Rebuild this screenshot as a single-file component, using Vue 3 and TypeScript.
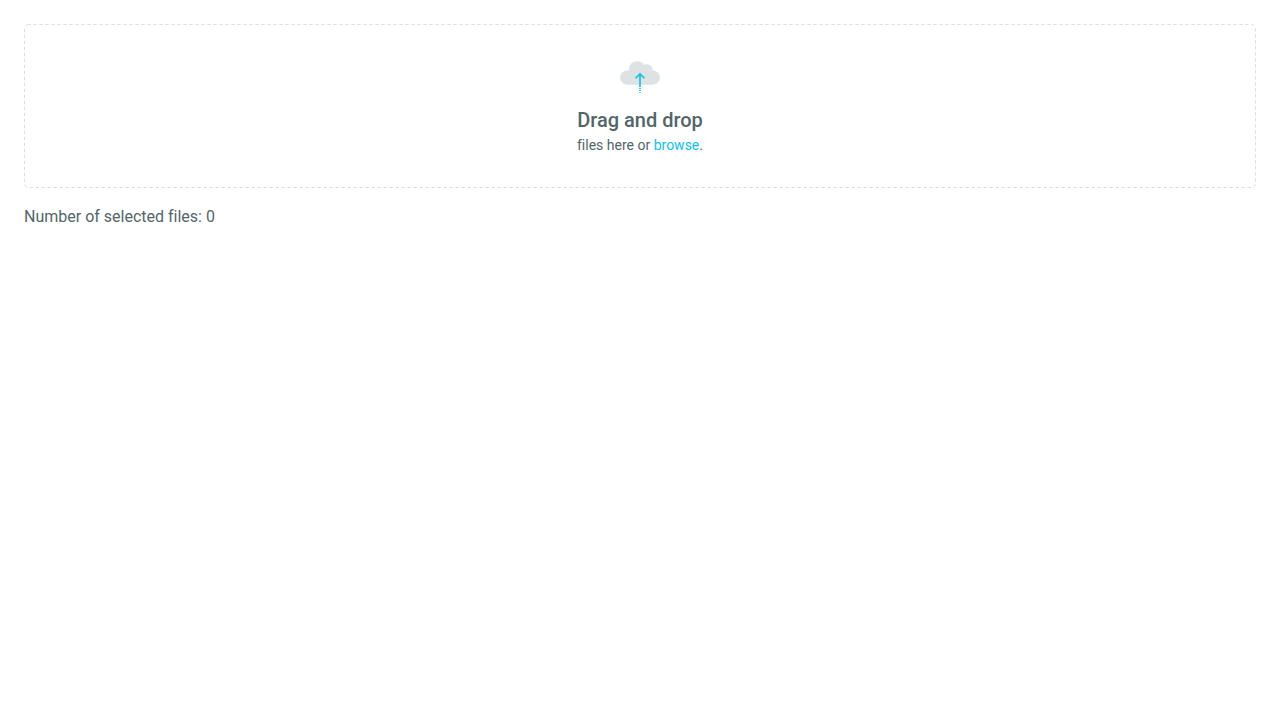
<script setup lang="ts">
import { ref } from 'vue'

const files = ref<File[]>([])
const picker = ref<HTMLInputElement | null>(null)

function onDrop(event: DragEvent) {
  files.value = Array.from(event.dataTransfer?.files ?? [])
}

function onPick(event: Event) {
  files.value = Array.from((event.target as HTMLInputElement).files ?? [])
}
</script>

<template>
  <main class="page">
    <section class="dropzone" @dragover.prevent @drop.prevent="onDrop">
      <svg class="outline" aria-hidden="true">
        <rect class="outline-rect" x="0.5" y="0.5" rx="4" />
      </svg>
      <svg class="cloud" width="40" height="40" viewBox="0 0 40 40" aria-hidden="true">
        <path
          fill="#dde2e2"
          d="M7.2 27.7A7.15 7.15 0 0 1 7.2 13.4H9A8.3 8.3 0 0 1 24.1 7.9A6 6 0 0 1 32.8 13.4A7.15 7.15 0 0 1 32.8 27.7Z"
        />
        <path
          fill="none"
          stroke="#0bbfef"
          stroke-width="1.6"
          d="M20 16.6V27.2M15.6 21.2L20 16.8L24.4 21.2"
        />
        <path fill="#0bbfef" d="M19.2 27.2h1.6v2.8h-1.6zM19.2 31h1.6v1.1h-1.6zM19.2 33h1.6v1h-1.6zM19.2 35h1.6v.8h-1.6z" />
      </svg>
      <h1 class="title">Drag and drop</h1>
      <p class="hint">files here or <a class="browse" @click="picker?.click()">browse</a>.</p>
      <input ref="picker" class="picker" type="file" multiple @change="onPick" />
    </section>
    <p class="count">Number of selected files: {{ files.length }}</p>
  </main>
</template>

<style scoped>
.page {
  padding: 24px;
  color: #526669;
  font-family: Roboto, sans-serif;
  font-variant-ligatures: none;
  -webkit-font-smoothing: antialiased;
}
.dropzone {
  position: relative;
  box-sizing: border-box;
  height: 164px;
  padding-top: 33px;
  display: flex;
  flex-direction: column;
  align-items: center;
}
.outline {
  position: absolute;
  inset: 0;
  width: 100%;
  height: 100%;
  pointer-events: none;
}
.outline-rect {
  width: calc(100% - 1px);
  height: calc(100% - 1px);
  fill: none;
  stroke: #dddfdf;
  stroke-width: 1px;
  stroke-dasharray: 3.4 2.6;
  stroke-dashoffset: 1.2px;
}
.cloud {
  display: block;
}
.title {
  margin: 8px 0 0;
  font-size: 20px;
  line-height: 30px;
  font-weight: 500;
}
.hint {
  margin: 0;
  font-size: 14px;
  line-height: 20px;
}
.browse {
  color: #0bc1f0;
  cursor: pointer;
}
.picker {
  display: none;
}
.count {
  margin: 17px 0 0;
  font-size: 16px;
  line-height: 24px;
}
</style>
